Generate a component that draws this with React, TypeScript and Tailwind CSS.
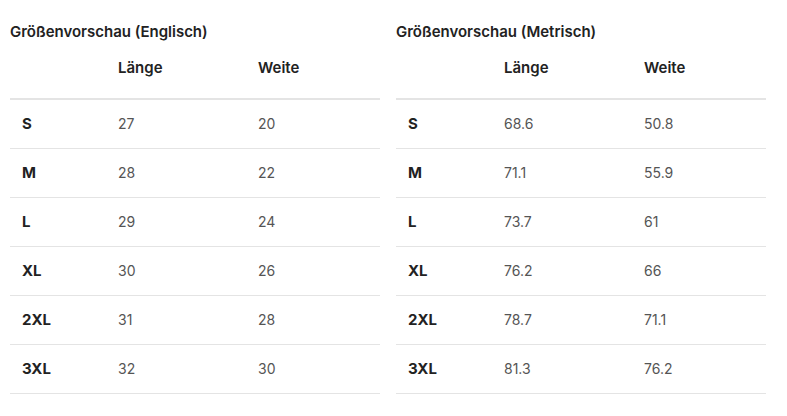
import React from 'react';

type Row = { size: string; length: string; width: string };

const imperial: Row[] = [
  { size: 'S', length: '27', width: '20' },
  { size: 'M', length: '28', width: '22' },
  { size: 'L', length: '29', width: '24' },
  { size: 'XL', length: '30', width: '26' },
  { size: '2XL', length: '31', width: '28' },
  { size: '3XL', length: '32', width: '30' },
];

const metric: Row[] = [
  { size: 'S', length: '68.6', width: '50.8' },
  { size: 'M', length: '71.1', width: '55.9' },
  { size: 'L', length: '73.7', width: '61' },
  { size: 'XL', length: '76.2', width: '66' },
  { size: '2XL', length: '78.7', width: '71.1' },
  { size: '3XL', length: '81.3', width: '76.2' },
];

const SizeTable: React.FC<{ title: string; rows: Row[] }> = ({ title, rows }) => (
  <section className="w-[370px]">
    <h3 className="pt-[22px] text-[15px] leading-5 font-semibold text-[#222]">{title}</h3>
    <div className="grid grid-cols-[96px_140px_134px] pt-4 pb-5 border-b-2 border-[#e4e4e4] text-[15px] leading-5 font-semibold text-[#222]">
      <div />
      <div className="pl-3">Länge</div>
      <div className="pl-3">Weite</div>
    </div>
    {rows.map((r) => (
      <div
        key={r.size}
        className="grid grid-cols-[96px_140px_134px] h-[49px] items-center border-b border-[#e4e4e4] leading-5"
      >
        <div className="pl-3 text-[15px] font-bold text-[#222]">{r.size}</div>
        <div className="pl-3 text-[14px] text-[#555]">{r.length}</div>
        <div className="pl-3 text-[14px] text-[#555]">{r.width}</div>
      </div>
    ))}
  </section>
);

export default function App() {
  return (
    <div className="w-[787px] h-[416px] bg-white pl-[10px] flex gap-4 font-['Inter',sans-serif]">
      <SizeTable title="Größenvorschau (Englisch)" rows={imperial} />
      <SizeTable title="Größenvorschau (Metrisch)" rows={metric} />
    </div>
  );
}
